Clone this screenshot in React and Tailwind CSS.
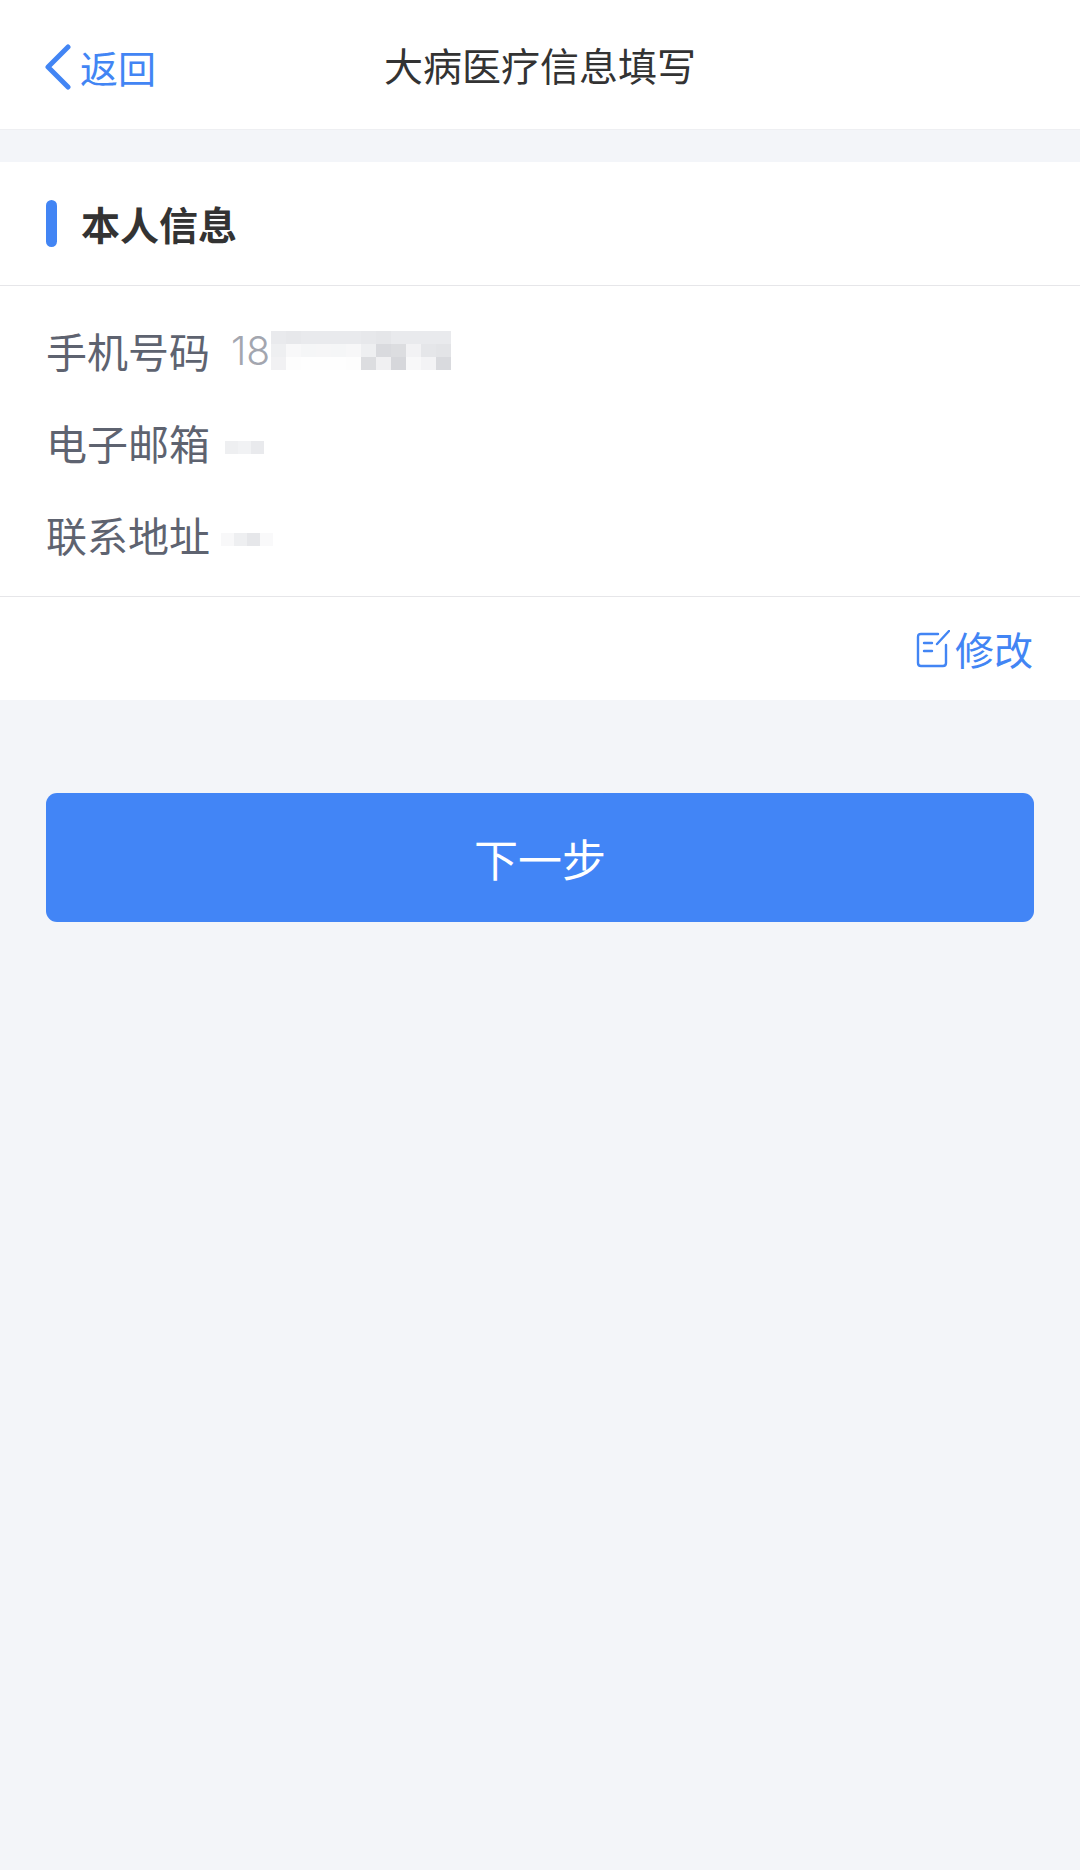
import React from 'react';

const font = "font-['Noto_Sans_CJK_SC','Noto_Sans',sans-serif]";

const phoneMask = [
  'bg-[#e9eaed]', 'bg-[#e7e8eb]', 'bg-[#e9eaed]', 'bg-[#e9eaed]', 'bg-[#e9eaed]', 'bg-[#e9eaed]', 'bg-[#e7e8eb]', 'bg-[#e5e6e9]', 'bg-[#e9eaed]', 'bg-[#e9eaed]', 'bg-[#e9eaed]', 'bg-[#e9eaed]',
  'bg-[#eeeff1]', 'bg-[#f8f8f9]', 'bg-[#f5f6f7]', 'bg-[#f6f6f7]', 'bg-[#f5f6f7]', 'bg-[#f7f7f8]', 'bg-[#eeeff1]', 'bg-[#d9dade]', 'bg-[#dcdde0]', 'bg-[#f2f2f4]', 'bg-[#e5e6e9]', 'bg-[#e3e4e7]',
  'bg-[#f1f1f3]', 'bg-[#fdfdfd]', 'bg-[#fefefe]', 'bg-[#fefefe]', 'bg-[#fefefe]', 'bg-[#fdfdfd]', 'bg-[#dcdde0]', 'bg-[#f0f0f2]', 'bg-[#d6d7db]', 'bg-[#f8f8f9]', 'bg-[#f3f3f5]', 'bg-[#d9dade]',
];

const InfoRow = ({ label, children }) => (
  <div className="flex items-center h-[92px]">
    <span className="w-[232px] pl-[46px] text-[41px] leading-none text-[#5e6370]">{label}</span>
    {children}
  </div>
);

const App = () => {
  return (
    <div className={`${font} w-[1080px] h-[1870px] bg-[#f3f5f9] flex flex-col`}>
      <header className="relative h-[130px] bg-white border-b border-[#eeeff2] flex items-center justify-center shrink-0">
        <div className="absolute left-[44px] top-[44px] flex items-center text-[#4285f4]">
          <svg width="27" height="46" viewBox="0 0 27 46" fill="none" stroke="currentColor" strokeWidth="5" strokeLinecap="round" strokeLinejoin="round">
            <path d="M24 3 L4 23 L24 43" />
          </svg>
          <span className="ml-[9px] text-[38px] leading-none">返回</span>
        </div>
        <h1 className="text-[39px] leading-none font-normal text-[#333333]">大病医疗信息填写</h1>
      </header>

      <section className="mt-[32px] bg-white shrink-0">
        <div className="h-[124px] flex items-center pl-[46px] border-b border-[#e6e6e9]">
          <span className="w-[11px] h-[47px] rounded-full bg-[#4285f4]" />
          <span className="ml-[24px] text-[39px] leading-none font-bold text-[#333333]">本人信息</span>
        </div>
        <div className="h-[311px] pt-[18px] border-b border-[#e6e6e9]">
          <InfoRow label="手机号码">
            <div className="flex items-center">
              <span className="ml-[-1px] text-[39px] leading-none text-[#a3a6af] font-['Inter',sans-serif] font-light">18</span>
              <div className="grid grid-cols-[repeat(12,15px)] auto-rows-[13px] ml-[1px]">
                {phoneMask.map((cell, idx) => (
                  <div key={idx} className={cell} />
                ))}
              </div>
            </div>
          </InfoRow>
          <InfoRow label="电子邮箱">
            <div className="flex mt-[10px] ml-[-7px] h-[13px]">
              <div className="w-[13px] bg-[#eeeff1]" />
              <div className="w-[13px] bg-[#f1f2f4]" />
              <div className="w-[13px] bg-[#e9eaed]" />
            </div>
          </InfoRow>
          <InfoRow label="联系地址">
            <div className="flex mt-[10px] ml-[-11px] h-[13px]">
              <div className="w-[13px] bg-[#f8f8f9]" />
              <div className="w-[13px] bg-[#eeeff1]" />
              <div className="w-[13px] bg-[#e6e7ea]" />
              <div className="w-[13px] bg-[#f9f9fa]" />
            </div>
          </InfoRow>
        </div>
        <div className="h-[103px] flex items-center justify-end pr-[47px] text-[#4285f4]">
          <svg width="34" height="38" viewBox="0 0 34 38" fill="none" stroke="currentColor" strokeWidth="2.4" strokeLinecap="round" strokeLinejoin="round">
            <path d="M22 4 H5 Q2 4 2 7 V33 Q2 36 5 36 H27 Q30 36 30 33 V15" />
            <path d="M33 1 L21 14" />
            <path d="M8 13 H16" />
            <path d="M8 21 H16" />
          </svg>
          <span className="ml-[5px] text-[39px] leading-none">修改</span>
        </div>
      </section>

      <div className="px-[46px] pt-[93px]">
        <button className="w-full h-[129px] rounded-[11px] bg-[#4285f6] text-white text-[44px] leading-none">下一步</button>
      </div>
    </div>
  );
};

export default App;
